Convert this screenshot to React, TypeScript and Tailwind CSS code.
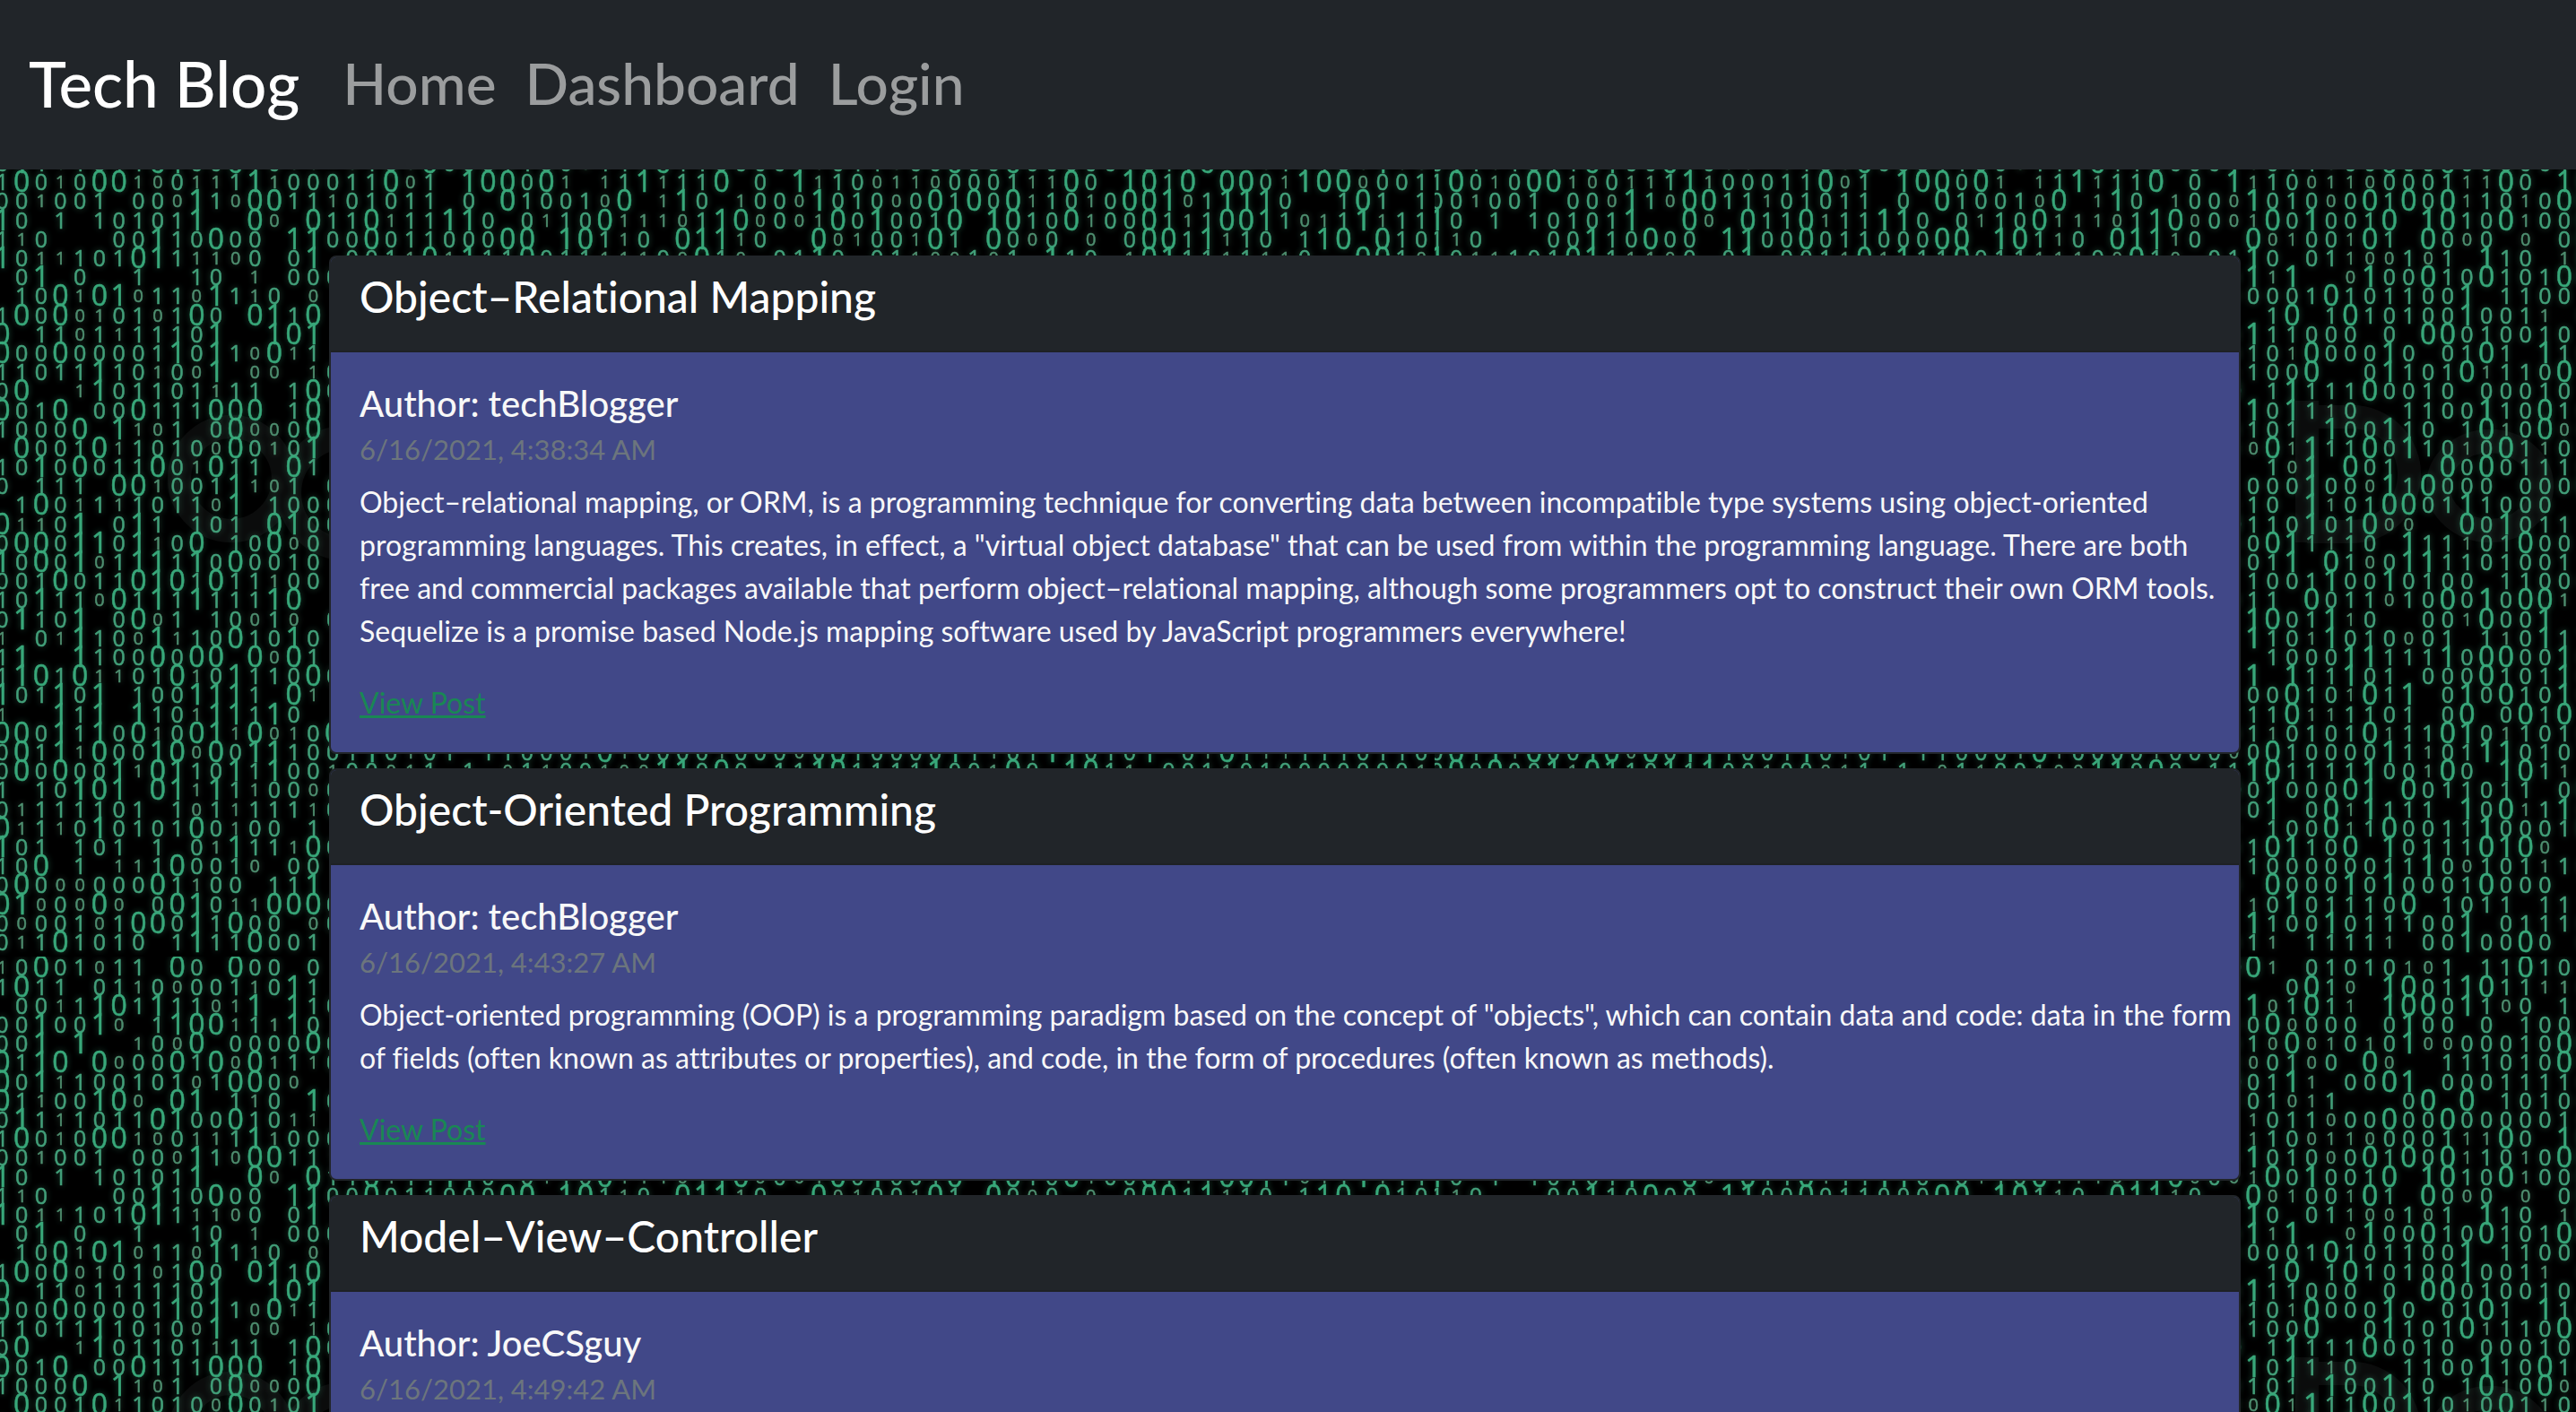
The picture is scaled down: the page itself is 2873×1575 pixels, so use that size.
type Post = { title: string; author: string; date: string; text?: string };

const posts: Post[] = [
  {
    title: 'Object–Relational Mapping',
    author: 'techBlogger',
    date: '6/16/2021, 4:38:34 AM',
    text: 'Object–relational mapping, or ORM, is a programming technique for converting data between incompatible type systems using object-oriented programming languages. This creates, in effect, a "virtual object database" that can be used from within the programming language. There are both free and commercial packages available that perform object–relational mapping, although some programmers opt to construct their own ORM tools. Sequelize is a promise based Node.js mapping software used by JavaScript programmers everywhere!',
  },
  {
    title: 'Object-Oriented Programming',
    author: 'techBlogger',
    date: '6/16/2021, 4:43:27 AM',
    text: 'Object-oriented programming (OOP) is a programming paradigm based on the concept of "objects", which can contain data and code: data in the form of fields (often known as attributes or properties), and code, in the form of procedures (often known as methods).',
  },
  {
    title: 'Model–View–Controller',
    author: 'JoeCSguy',
    date: '6/16/2021, 4:49:42 AM',
  },
];

// Digit codes: o/i small, 0/1 medium, O/I large, "." empty.
// Columns 0-17 of every row of the tile.
const leftColumns = [
  'i0O01o11.O0.O00.0.', '1O11.01i0o001i0I1.', '.00i1IO1I11oiI.I10', '00I00Io.1IOOi1iI0.', '00I.I..i0oO.0000O0',
  'O1IO.Oo00O1OoOi1i0', 'O0Ii100101o1OO0o..', 'O1i00IOo.OI.1i0.I0', '0I1i1011OI00O10ii.', '1O0i0OOio0ii1Ii000',
  '00i001.00oI1oOO11i', 'I0.1.10101I..Oo.O1', '1i0...00I10O00.II0', 'I0ii101OI1iio0.0I.', '.0I.0..1..10.i.000',
  '.10OiOIo11oI1i0.o.', '1O0Ooi01o1O0.OI1O.', 'O.11o1i1110I..IOI.', 'O00O00001I0I1oOi1.', '11011I10i0oI.oo.i0',
  '0O..iI01101i11.1O0', 'O01O.00O111OOO.1O.', '1000O.Iio1.0Ooo0O.', '.O001Oi1010oO0i0I.', '10I0O011O0iO11.O1.',
  '0.111.OOi001Iio1.0', '.1O0i1i1011oI.1000', 'Oii0I.0I1.101.OI00', '0OO0II0Ii0O.10Oo0.', 'I0O0Io1II1I0O0010.',
  '001O011OIO1O11i00.', '10I11oO1I1I111IO..', '0I10I.0Oo1.10o1o.0', 'i.0iI10oIi10O10I0.', '1I..I100O0OO.OoO1.',
  '1IO1Oii01Oi0I110O0', 'I01I0I.100III1.Oi.', 'i..I1I.I10iII1I0..', 'OO0I1I0Oi0OIiOoi0O', '0O1IiO00IOoO0II100',
  '0O0O00IiOI10I1I00i', '1.10IOI.OIiI1i00o0', '0i111101.1o1i111i0', 'Oi1i0I0101O0i00.1.', 'I01.101.1.0iI11iO0',
  '10O.1.ii1O001o.00.', '0O0oo000O1i00.11I.', 'OIo0oOo.0OI0iiOOO0', '0o001o1OO0I1O00.o0', '0i1O1010.1I11O001.',
];

// Columns 42-58 of every row; an empty string is filled from the noise function.
const rightColumns = [
  'Oi.01010io1.11O10', '..0O1o.IO01IO11ii', 'Io1O1i.IOO0I1o0.1', '0Oo000.0I00.0.100', '1oOoi0i0Ioo00010O',
  '', '', '', '', 'i10oiio0001iiO0.I',
  'I010o0O1O0Oi10i0O', 'iO0I001O.IO10Oi00', 'Ooi00iO1.O0o0.o.0', 'I0.01ioo1o1.I10.i', 'IiI..oI00O10O101O',
  '0001O101100I.1100', '.1O.1O10100I001i.', 'I11000.0.OO010010', '10iO000I0.01O1.I1', '100O..0I101Oi110O',
  '.1I111O0010.00010', 'I0I1i0..1100I10O1', '101.I00I10.1Oi0Oo', 'oOiI11O0I10i0O1i0', '.1oI.O01..O0O0111',
  '000I00oI1O000.000', '10.Ii01OO01I1000.', '110I01Ooo..O0I011', '0OI1i10.I11i01O00', '01I.O1o0II1101001',
  '1001I00I0100.1100', '11.O011o10O0I0OOi', 'IO01Ii0..00iO00I.', 'I10iI010o01.1i0I1', '.1000II111I0OO00I',
  'I.I11I01.000O101I', '00O10iO1I.0I0O10I', '11Oii1101.0O.0O1O', '1i0101Oi11OI0i101', '0O10000I1i01II010',
  'IO1111I00iO0.IO1i', '0I000OI.O011011.0', '0I.0OiI111.I0Oi1I', '.100Oi1O0011I0001', '1OI10O.I0111OIOo.',
  '100000011I0o101i1', '.O000I0I0001O000.', 'i0I01110O.1011.11', 'I100I011100I.0111', '1i.1111i.00I00O0.',
];

// Columns 18-41 and 59-73 of the rows that show above the first post.
const middleColumns: Record<number, [string, string]> = {
  9: ['11Oo1.IOO0Oi.i1Ii11O.0.I', 'O1O.OO0iIOOo001'],
  10: ['01011.0.O1001oO.iI0.i00o', 'OIo1III0..1O1.1'],
  11: ['1Oi11II0.0i10Oiiio1IOo0o', 'O1i1OOI1oi1Ii11'],
  12: ['0O011000OO.IO1i0.OIIi0..', 'OO1Ii10.1IO.O10'],
  13: ['001iOiI11O011iii0oO1o.01', 'OI11i1ii0..OO1o'],
};

const noise = (row: number, from: number, length: number) =>
  Array.from({ length }, (_, n) => {
    const v = Math.abs(Math.sin(row * 12.9898 + (from + n) * 78.233) * 43758.5453);
    return '01O0i1o.0I10'[Math.floor((v - Math.floor(v)) * 12)];
  }).join('');

const rows = leftColumns.map((left, r) => {
  const [a, b] = middleColumns[r] ?? [noise(r, 18, 24), noise(r, 59, 15)];
  return left + a + (rightColumns[r] || noise(r, 42, 17)) + b;
});

const sizes = [
  { codes: 'oi', size: 20, fill: '#4f8f70', drop: 7 },
  { codes: '01', size: 25, fill: '#43a07a', drop: 9 },
  { codes: 'OI', size: 32, fill: '#38a87a', drop: 11 },
];

const digit: Record<string, string> = { o: '0', '0': '0', O: '0', i: '1', '1': '1', I: '1' };

function BinaryRain() {
  return (
    <svg aria-hidden="true" className="absolute inset-0 -z-10 h-full w-full">
      <defs>
        <filter id="glow" x="0" y="0" width="1" height="1">
          <feGaussianBlur stdDeviation="3" />
        </filter>
        <filter id="soft" x="0" y="0" width="1" height="1">
          <feGaussianBlur stdDeviation="0.6" />
        </filter>
        <g id="digits" fontFamily="'Open Sans', 'Noto Sans', sans-serif" textAnchor="middle">
          {rows.map((row, r) =>
            sizes.map(({ codes, size, fill, drop }) => {
              const cols = [...row].map((c, n) => [c, n] as const).filter(([c]) => codes.includes(c));
              return (
                <text
                  key={`${r}-${size}`}
                  x={cols.map(([, n]) => (2.5 + n * 21.68).toFixed(1)).join(' ')}
                  y={Math.round(12.3 + r * 21.2 + drop)}
                  fontSize={size}
                  fontWeight={400}
                  fill={fill}
                  stroke={fill}
                  strokeWidth={0.5}
                >
                  {cols.map(([c]) => digit[c]).join('')}
                </text>
              );
            }),
          )}
        </g>
        <pattern id="tile" width="1600" height="1067" patternUnits="userSpaceOnUse">
          <rect width="1600" height="1067" fill="#000" />
          <g fill="none" stroke="#0b0c0c" strokeWidth="26">
            <circle cx="258" cy="534" r="58" />
            <circle cx="385" cy="550" r="62" />
            <path d="M973 447v158M973 465h50a58 58 0 0 1 0 128h-50" />
            <ellipse cx="1177" cy="542" rx="58" ry="50" />
          </g>
          <use href="#digits" filter="url(#glow)" opacity="0.45" />
          <use href="#digits" filter="url(#soft)" />
        </pattern>
      </defs>
      <rect width="100%" height="100%" fill="url(#tile)" />
    </svg>
  );
}

function PostCard({ title, author, date, text }: Post) {
  return (
    <article className="overflow-hidden rounded-lg border-2 border-[#212529] bg-[#414888]">
      <header className="border-b-2 border-[#1e2125] bg-[#212529] px-8 pt-[15px] pb-[31px]">
        <h2 className="text-[48px] leading-[58px] font-medium text-white">{title}</h2>
      </header>
      <div className="pt-[33px] pr-2 pb-[31px] pl-8 text-[#f8f8f8]">
        <h3 className="text-[40px] leading-[48px] font-medium">Author: {author}</h3>
        <p className="mt-2 text-[31px] leading-[38px] text-[#6c757d]">{date}</p>
        {text && <p className="mt-4 text-[32px] leading-[48px]">{text}</p>}
        <p className="mt-8 text-[32px] leading-[48px]">
          <a href="#post" className="text-[#198754] underline">
            View Post
          </a>
        </p>
      </div>
    </article>
  );
}

export default function App() {
  return (
    <div className="relative isolate h-screen overflow-hidden bg-black font-['Lato',sans-serif] [font-variant-ligatures:no-common-ligatures]">
      <BinaryRain />
      <nav className="flex h-[189px] items-center bg-[#212529] px-8 pb-1">
        <a href="#top" className="mr-8 text-[71px] leading-[108px] font-medium text-white">
          Tech Blog
        </a>
        <ul className="flex text-[64px] leading-[96px] font-medium text-[#9b9d9e]">
          {['Home', 'Dashboard', 'Login'].map((name) => (
            <li key={name}>
              <a href={`#${name.toLowerCase()}`} className="block px-4">
                {name}
              </a>
            </li>
          ))}
        </ul>
      </nav>
      <main className="flex flex-col gap-4 pt-24 pr-[374px] pl-[367px]">
        {posts.map((post) => (
          <PostCard key={post.title} {...post} />
        ))}
      </main>
    </div>
  );
}
